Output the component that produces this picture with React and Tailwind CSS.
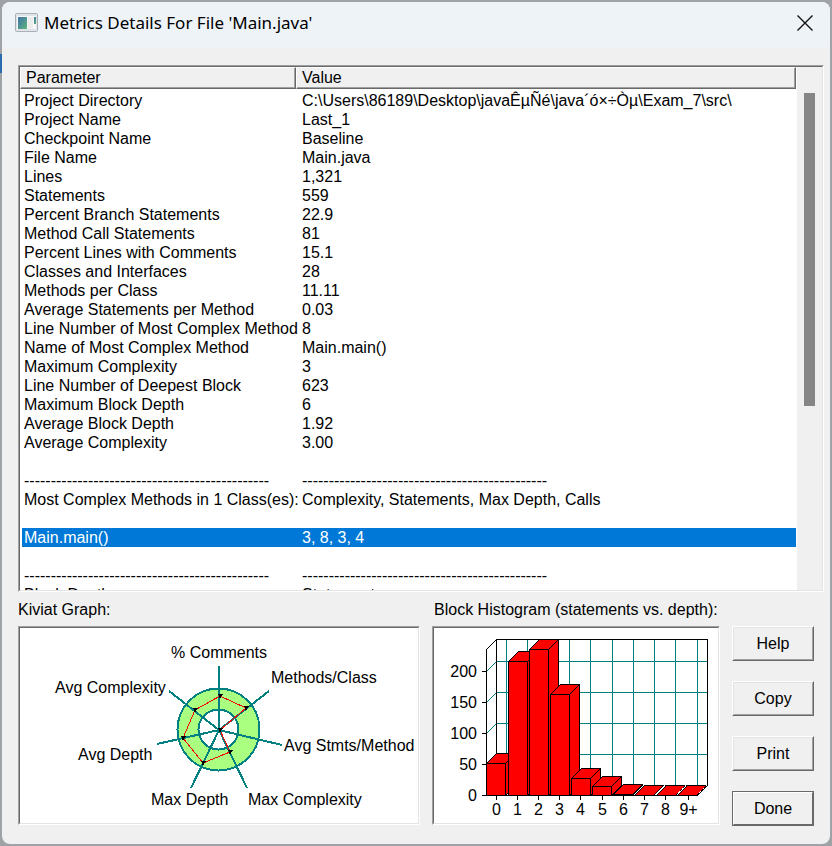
import clsx from "clsx";

const RULE = "-".repeat(46);

const rows = [
  ["Project Directory", "C:\\Users\\86189\\Desktop\\javaÊµÑé\\java´ó×÷Òµ\\Exam_7\\src\\"],
  ["Project Name", "Last_1"],
  ["Checkpoint Name", "Baseline"],
  ["File Name", "Main.java"],
  ["Lines", "1,321"],
  ["Statements", "559"],
  ["Percent Branch Statements", "22.9"],
  ["Method Call Statements", "81"],
  ["Percent Lines with Comments", "15.1"],
  ["Classes and Interfaces", "28"],
  ["Methods per Class", "11.11"],
  ["Average Statements per Method", "0.03"],
  ["Line Number of Most Complex Method", "8"],
  ["Name of Most Complex Method", "Main.main()"],
  ["Maximum Complexity", "3"],
  ["Line Number of Deepest Block", "623"],
  ["Maximum Block Depth", "6"],
  ["Average Block Depth", "1.92"],
  ["Average Complexity", "3.00"],
  ["", ""],
  [RULE, RULE],
  ["Most Complex Methods in 1 Class(es):", "Complexity, Statements, Max Depth, Calls"],
  ["", ""],
  ["Main.main()", "3, 8, 3, 4"],
  ["", ""],
  [RULE, RULE],
  ["Block Depth", "Statements"],
];

const SELECTED_ROW = 23;

const spokes = [
  { label: "% Comments", end: [199, 38], point: [200, 68], text: [151, 30] },
  { label: "Methods/Class", end: [249, 63], point: [226, 80], text: [251, 55] },
  { label: "Avg Stmts/Method", end: [262, 117], point: [200, 102], text: [264, 123] },
  { label: "Max Complexity", end: [227, 160], point: [210, 124], text: [228, 177] },
  { label: "Max Depth", end: [171, 160], point: [183, 135], text: [131, 177] },
  { label: "Avg Depth", end: [137, 116], point: [163, 110], text: [58, 132] },
  { label: "Avg Complexity", end: [149, 63], point: [175, 82], text: [35, 65] },
];

// x is the left edge of the front face, top its upper edge
const bars = [
  { label: "0", x: 52.5, top: 135.5, tick: 62.5 },
  { label: "1", x: 74.5, top: 33.5, tick: 83.5 },
  { label: "2", x: 95.5, top: 21.5, tick: 104.5 },
  { label: "3", x: 116.5, top: 66.5, tick: 125.5 },
  { label: "4", x: 137.5, top: 150.5, tick: 146.5 },
  { label: "5", x: 158.5, top: 158.5, tick: 168.5 },
  { label: "6", x: 179.5, top: 166.5, tick: 189.5 },
  { label: "7", x: 200.5, top: 167.5, tick: 210.5 },
  { label: "8", x: 222.5, top: 167.5, tick: 231.5 },
  { label: "9+", x: 243.5, top: 167.5, tick: 254.5 },
];

const gridX = [72.5, 93.5, 114.5, 135.5, 156.5, 178.5, 199.5, 220.5, 241.5, 263.5];
const BASE = 167.5;
const DEPTH = 10;

const AppIcon = () => (
  <svg viewBox="0 0 23 19" className="h-[19px] w-[23px]" aria-hidden="true">
    <defs>
      <linearGradient id="pane" x1="0" y1="0" x2="1" y2="1">
        <stop offset="0" stopColor="#3f74a8" />
        <stop offset="1" stopColor="#5fb47c" />
      </linearGradient>
    </defs>
    <rect x="0.5" y="0.5" width="22" height="18" rx="1" fill="#dfe4e9" stroke="#a9b0b7" />
    <rect x="2" y="3" width="19" height="13" fill="#f7f8f9" />
    <rect x="3" y="4" width="9" height="12" fill="url(#pane)" />
    <rect x="13" y="4" width="5" height="12" fill="#ececec" />
    <rect x="19" y="4" width="2" height="7" fill="url(#pane)" />
  </svg>
);

const TitleBar = () => (
  <header className="flex h-[45px] shrink-0 items-center bg-[#eef3f8] pr-4 pb-1 pl-[13px]">
    <AppIcon />
    <h1 className="ml-1.5 flex-1 font-['Noto_Sans','Open_Sans',sans-serif] text-[17px] whitespace-nowrap">
      Metrics Details For File 'Main.java'
    </h1>
    <button type="button" aria-label="Close" className="p-px">
      <svg viewBox="0 0 16 16" className="size-4" stroke="#111" strokeWidth="1.4" aria-hidden="true">
        <path d="M0.5 0.5 15.5 15.5M15.5 0.5 0.5 15.5" />
      </svg>
    </button>
  </header>
);

const Sunken = ({ className, children }) => (
  <div className={clsx("border border-t-[#a0a0a0] border-r-white border-b-white border-l-[#a0a0a0]", className)}>
    <div className="flex min-h-0 w-full border border-t-[#696969] border-r-[#e3e3e3] border-b-[#e3e3e3] border-l-[#696969] bg-white">
      {children}
    </div>
  </div>
);

const HeaderCell = ({ className, children }) => (
  <th scope="col" className={clsx("p-0 pb-0.5 text-left font-normal", className)}>
    <div className="border border-t-white border-r-[#696969] border-b-[#696969] border-l-white">
      <div className="h-5 border-r border-b border-[#a0a0a0] bg-[#f0f0f0] pl-[5px] leading-5">
        {children}
      </div>
    </div>
  </th>
);

const MetricsTable = () => (
  <Sunken className="flex min-h-0 flex-1">
    <div className="min-w-0 flex-1 overflow-hidden pr-px">
      <table className="w-full table-fixed border-separate border-spacing-0">
        <thead>
          <tr>
            <HeaderCell className="w-[276px]">Parameter</HeaderCell>
            <HeaderCell>Value</HeaderCell>
          </tr>
        </thead>
        <tbody>
          {rows.map(([name, value], i) => (
            <tr
              key={i}
              aria-selected={i === SELECTED_ROW}
              className={clsx("h-[19px] whitespace-pre", i === SELECTED_ROW && "text-white")}
            >
              <td className={clsx("border-l-2 border-white p-0 pl-0.5", i === SELECTED_ROW && "bg-[#0078d7]")}>
                {name}
              </td>
              <td className={clsx("p-0 pl-1.5", i === SELECTED_ROW && "bg-[#0078d7]")}>{value}</td>
            </tr>
          ))}
        </tbody>
      </table>
    </div>
    <div className="flex w-[25px] shrink-0 flex-col bg-[#f0f0f0] pt-[26px] pl-[7px]">
      <div className="h-[63%] w-[11px] bg-[#868686]" />
    </div>
  </Sunken>
);

const KiviatGraph = () => (
  <svg viewBox="0 0 398 195" className="block w-full" role="img" aria-label="Kiviat graph">
    <g shapeRendering="crispEdges">
      <circle cx="198.5" cy="101.5" r="41" fill="#aaff80" stroke="#008080" strokeWidth="2" />
      <circle cx="198.5" cy="101.5" r="20" fill="#fff" stroke="#008080" strokeWidth="2" />
      {spokes.map(({ label, end }) => (
        <line key={label} x1="199" y1="102" x2={end[0]} y2={end[1]} stroke="#008080" strokeWidth="2" />
      ))}
      <polygon points={spokes.map((s) => s.point.join(",")).join(" ")} fill="none" stroke="#f00" />
      {spokes.map(({ label, point: [x, y] }) => (
        <path key={label} d={`M${x - 3} ${y - 2}h6l-2 2v2h-2v-2z`} />
      ))}
    </g>
    {spokes.map(({ label, text }) => (
      <text key={label} x={text[0]} y={text[1]}>
        {label}
      </text>
    ))}
  </svg>
);

const Bar = ({ x, top }) => {
  const right = x + 19;
  const face = `M${x} ${BASE}V${top}H${right}V${BASE}z`;
  const lid = `M${x} ${top}l${DEPTH} -${DEPTH}H${right + DEPTH}L${right} ${top}z`;
  const side = `M${right} ${top}l${DEPTH} -${DEPTH}V${BASE - DEPTH}L${right} ${BASE}z`;
  return <path d={side + face + lid} fill="#f00" stroke="#000" />;
};

const BlockHistogram = () => (
  <svg viewBox="0 0 284 195" className="block w-full" role="img" aria-label="Block histogram">
    <g shapeRendering="crispEdges" fill="none">
      <g stroke="#008080">
        {gridX.map((x) => (
          <path key={x} d={`M${x} 11.5V157.5`} />
        ))}
        {[50, 100, 150, 200].map((v) => {
          const y = BASE - (v / 50) * 31;
          return <path key={v} d={`M52.5 ${y}l${DEPTH} -${DEPTH}H273.5`} />;
        })}
      </g>
      <path d="M52.5 167.5V21.5L62.5 11.5H273.5V157.5L263.5 167.5H52.5M62.5 11.5V157.5H273.5" stroke="#000" />
      {bars.map(({ label, x, top }) => (
        <Bar key={label} x={x} top={top} />
      ))}
      <g stroke="#fff" strokeDasharray="1 1">
        <path d="M200.5 166.5 210 157M221.5 166.5 231 157M242.5 166.5 252 157M263.5 166.5 273 157" />
      </g>
      <g stroke="#000">
        {[0, 50, 100, 150, 200].map((v) => (
          <path key={v} d={`M48 ${BASE - (v / 50) * 31}h5`} />
        ))}
        {bars.map(({ label, tick }) => (
          <path key={label} d={`M${tick} 168v4`} />
        ))}
      </g>
    </g>
    {[0, 50, 100, 150, 200].map((v) => (
      <text key={v} x="43" y={BASE - (v / 50) * 31 + 5.5} textAnchor="end">
        {v}
      </text>
    ))}
    {bars.map(({ label, tick }) => (
      <text key={label} x={tick} y="187" textAnchor="middle">
        {label}
      </text>
    ))}
  </svg>
);

const Button = ({ isDefault, children }) => (
  <button
    type="button"
    className={clsx(
      "h-[35px] w-full border",
      isDefault ? "border-[#696969]" : "border-t-white border-r-[#696969] border-b-[#696969] border-l-white"
    )}
  >
    <span
      className={clsx(
        "flex h-full items-center justify-center border",
        isDefault
          ? "border-t-white border-r-[#696969] border-b-[#696969] border-l-white"
          : "border-t-[#e3e3e3] border-r-[#a0a0a0] border-b-[#a0a0a0] border-l-[#e3e3e3]"
      )}
    >
      {children}
    </span>
  </button>
);

export default function App() {
  return (
    <div className="relative flex h-screen flex-col bg-[#9fa3a8] p-0.5 font-['Liberation_Sans',Arial,sans-serif] text-base leading-[19px] text-black">
      {/* selected item of the window behind */}
      <div className="absolute top-[54px] left-0 h-[19px] w-0.5 bg-[#2b6cb0]" />

      <main className="flex min-h-0 flex-1 flex-col overflow-hidden rounded-lg bg-[#f0f0f0]">
        <TitleBar />

        <div className="flex min-h-0 flex-1 flex-col pt-[18px] pr-1.5 pb-[18px] pl-4">
          <MetricsTable />

          <div className="grid shrink-0 grid-cols-[402fr_288fr_82px] gap-x-3 pt-2 pr-2.5">
            <section>
              <h2 className="mb-[7px] whitespace-nowrap">Kiviat Graph:</h2>
              <Sunken>
                <KiviatGraph />
              </Sunken>
            </section>
            <section>
              <h2 className="mb-[7px] ml-0.5 whitespace-nowrap">Block Histogram (statements vs. depth):</h2>
              <Sunken>
                <BlockHistogram />
              </Sunken>
            </section>
            <div className="flex flex-col gap-5 pt-[26px]">
              <Button>Help</Button>
              <Button>Copy</Button>
              <Button>Print</Button>
              <Button isDefault>Done</Button>
            </div>
          </div>
        </div>
      </main>
    </div>
  );
}
